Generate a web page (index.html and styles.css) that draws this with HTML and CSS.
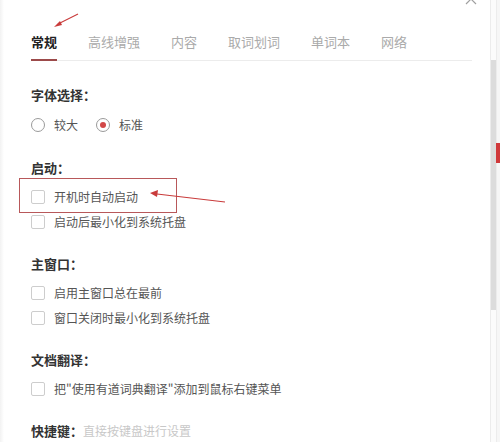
FILE: index.html
```html
<!DOCTYPE html>
<html lang="zh-CN">
<head>
    <meta charset="UTF-8">
    <meta name="viewport" content="width=device-width, initial-scale=1.0">
    <title>设置</title>
    <link rel="stylesheet" href="styles.css">
</head>
<body>
    <div class="window">
        <div class="main">
            <div class="titlebar">
                <svg class="close" width="12" height="12" viewBox="0 0 12 12">
                    <path d="M1 1L11 11M11 1L1 11" stroke="#a0a0a0" stroke-width="1.2" fill="none"/>
                </svg>
            </div>

            <div class="tabs">
                <div class="tab active">常规</div>
                <div class="tab">高线增强</div>
                <div class="tab">内容</div>
                <div class="tab">取词划词</div>
                <div class="tab">单词本</div>
                <div class="tab">网络</div>
            </div>

            <div class="section first">
                <div class="head">字体选择：</div>
                <div class="radios">
                    <label class="radio"><span class="circle"></span>较大</label>
                    <label class="radio"><span class="circle on"></span>标准</label>
                </div>
            </div>

            <div class="section">
                <div class="head">启动：</div>
                <div class="list">
                    <label class="check marked"><span class="box"></span>开机时自动启动</label>
                    <label class="check"><span class="box"></span>启动后最小化到系统托盘</label>
                </div>
            </div>

            <div class="section">
                <div class="head">主窗口：</div>
                <div class="list">
                    <label class="check"><span class="box"></span>启用主窗口总在最前</label>
                    <label class="check"><span class="box"></span>窗口关闭时最小化到系统托盘</label>
                </div>
            </div>

            <div class="section">
                <div class="head">文档翻译：</div>
                <div class="list">
                    <label class="check"><span class="box"></span>把"使用有道词典翻译"添加到鼠标右键菜单</label>
                </div>
            </div>

            <div class="section">
                <div class="head">快捷键：<span class="hint">直接按键盘进行设置</span></div>
            </div>
        </div>

        <div class="scroll">
            <div class="thumb"></div>
        </div>
        <div class="edge">
            <div class="badge"></div>
        </div>

        <!-- annotation arrows drawn over the screenshot -->
        <svg class="marks" width="500" height="442" viewBox="0 0 500 442">
            <line x1="78" y1="14" x2="58" y2="24" stroke="#c93b3b" stroke-width="1.2"/>
            <polygon points="54,27 60,21 62,25" fill="#c93b3b"/>
            <line x1="225" y1="202" x2="157" y2="194" stroke="#c93b3b" stroke-width="1.2"/>
            <polygon points="150,193 158,190 157,197" fill="#c93b3b"/>
        </svg>
    </div>
</body>
</html>
```

FILE: styles.css
```css
*{
    margin: 0;
    padding: 0;
    box-sizing: border-box;
}
body{
    background: #fff;
    font-family: "Noto Sans CJK SC", "Microsoft YaHei", sans-serif;
    color: #555;
}
.window{
    position: relative;
    display: flex;
    width: 500px;
    height: 442px;
    overflow: hidden;
    background: linear-gradient(to right, #f2f2f2 0, #fff 4px);
}
.main{
    width: 490px;
    padding-left: 31px;
    padding-right: 18px;
}
.titlebar{
    height: 33px;
    display: flex;
    justify-content: flex-end;
}
.close{
    margin-top: -7px;
    margin-right: -5px;
}
.tabs{
    display: flex;
    gap: 31px;
    border-bottom: 1px solid #ececec;
}
.tab{
    font-size: 13px;
    line-height: 18px;
    padding-bottom: 8px;
    color: #aaa;
    border-bottom: 2px solid transparent;
    margin-bottom: -1px;
}
.tab.active{
    color: #222;
    font-weight: bold;
    border-bottom-color: #9c4a4a;
}
.section{
    margin-top: 21px;
}
.section.first{
    margin-top: 25px;
}
.head{
    font-size: 13px;
    line-height: 18px;
    font-weight: bold;
    color: #333;
}
.hint{
    font-size: 12px;
    font-weight: normal;
    color: #c8c8c8;
}
.radios{
    display: flex;
    gap: 18px;
    margin-top: 7px;
    height: 27px;
    align-items: center;
}
.radio, .check{
    display: flex;
    align-items: center;
    font-size: 12px;
    color: #555;
}
.circle{
    width: 14px;
    height: 14px;
    border: 1px solid #9a9a9a;
    border-radius: 50%;
    margin-right: 9px;
    display: flex;
    align-items: center;
    justify-content: center;
}
.circle.on::after{
    content: "";
    width: 6px;
    height: 6px;
    border-radius: 50%;
    background: #d24848;
}
.list{
    margin-top: 7px;
}
.check{
    height: 25px;
}
.box{
    width: 14px;
    height: 14px;
    border: 1px solid #cdcdcd;
    border-radius: 2px;
    margin-right: 9px;
}
.marked{
    position: relative;
}
.marked::after{
    content: "";
    position: absolute;
    left: -12px;
    top: -6px;
    width: 156px;
    height: 33px;
    border: 1.5px solid #b8585a;
}
.scroll{
    width: 7px;
    padding-top: 60px;
    border-left: 1px solid #ececec;
    border-right: 1px solid #ececec;
    background: #fbfbfb;
}
.thumb{
    height: 250px;
    background: #dcdcdc;
}
.edge{
    width: 3px;
    padding-top: 143px;
    background: #f6f6f6;
}
.badge{
    height: 20px;
    background: #d0393b;
    margin-left: -1px;
}
.marks{
    position: absolute;
    left: 0;
    top: 0;
    pointer-events: none;
}
```
